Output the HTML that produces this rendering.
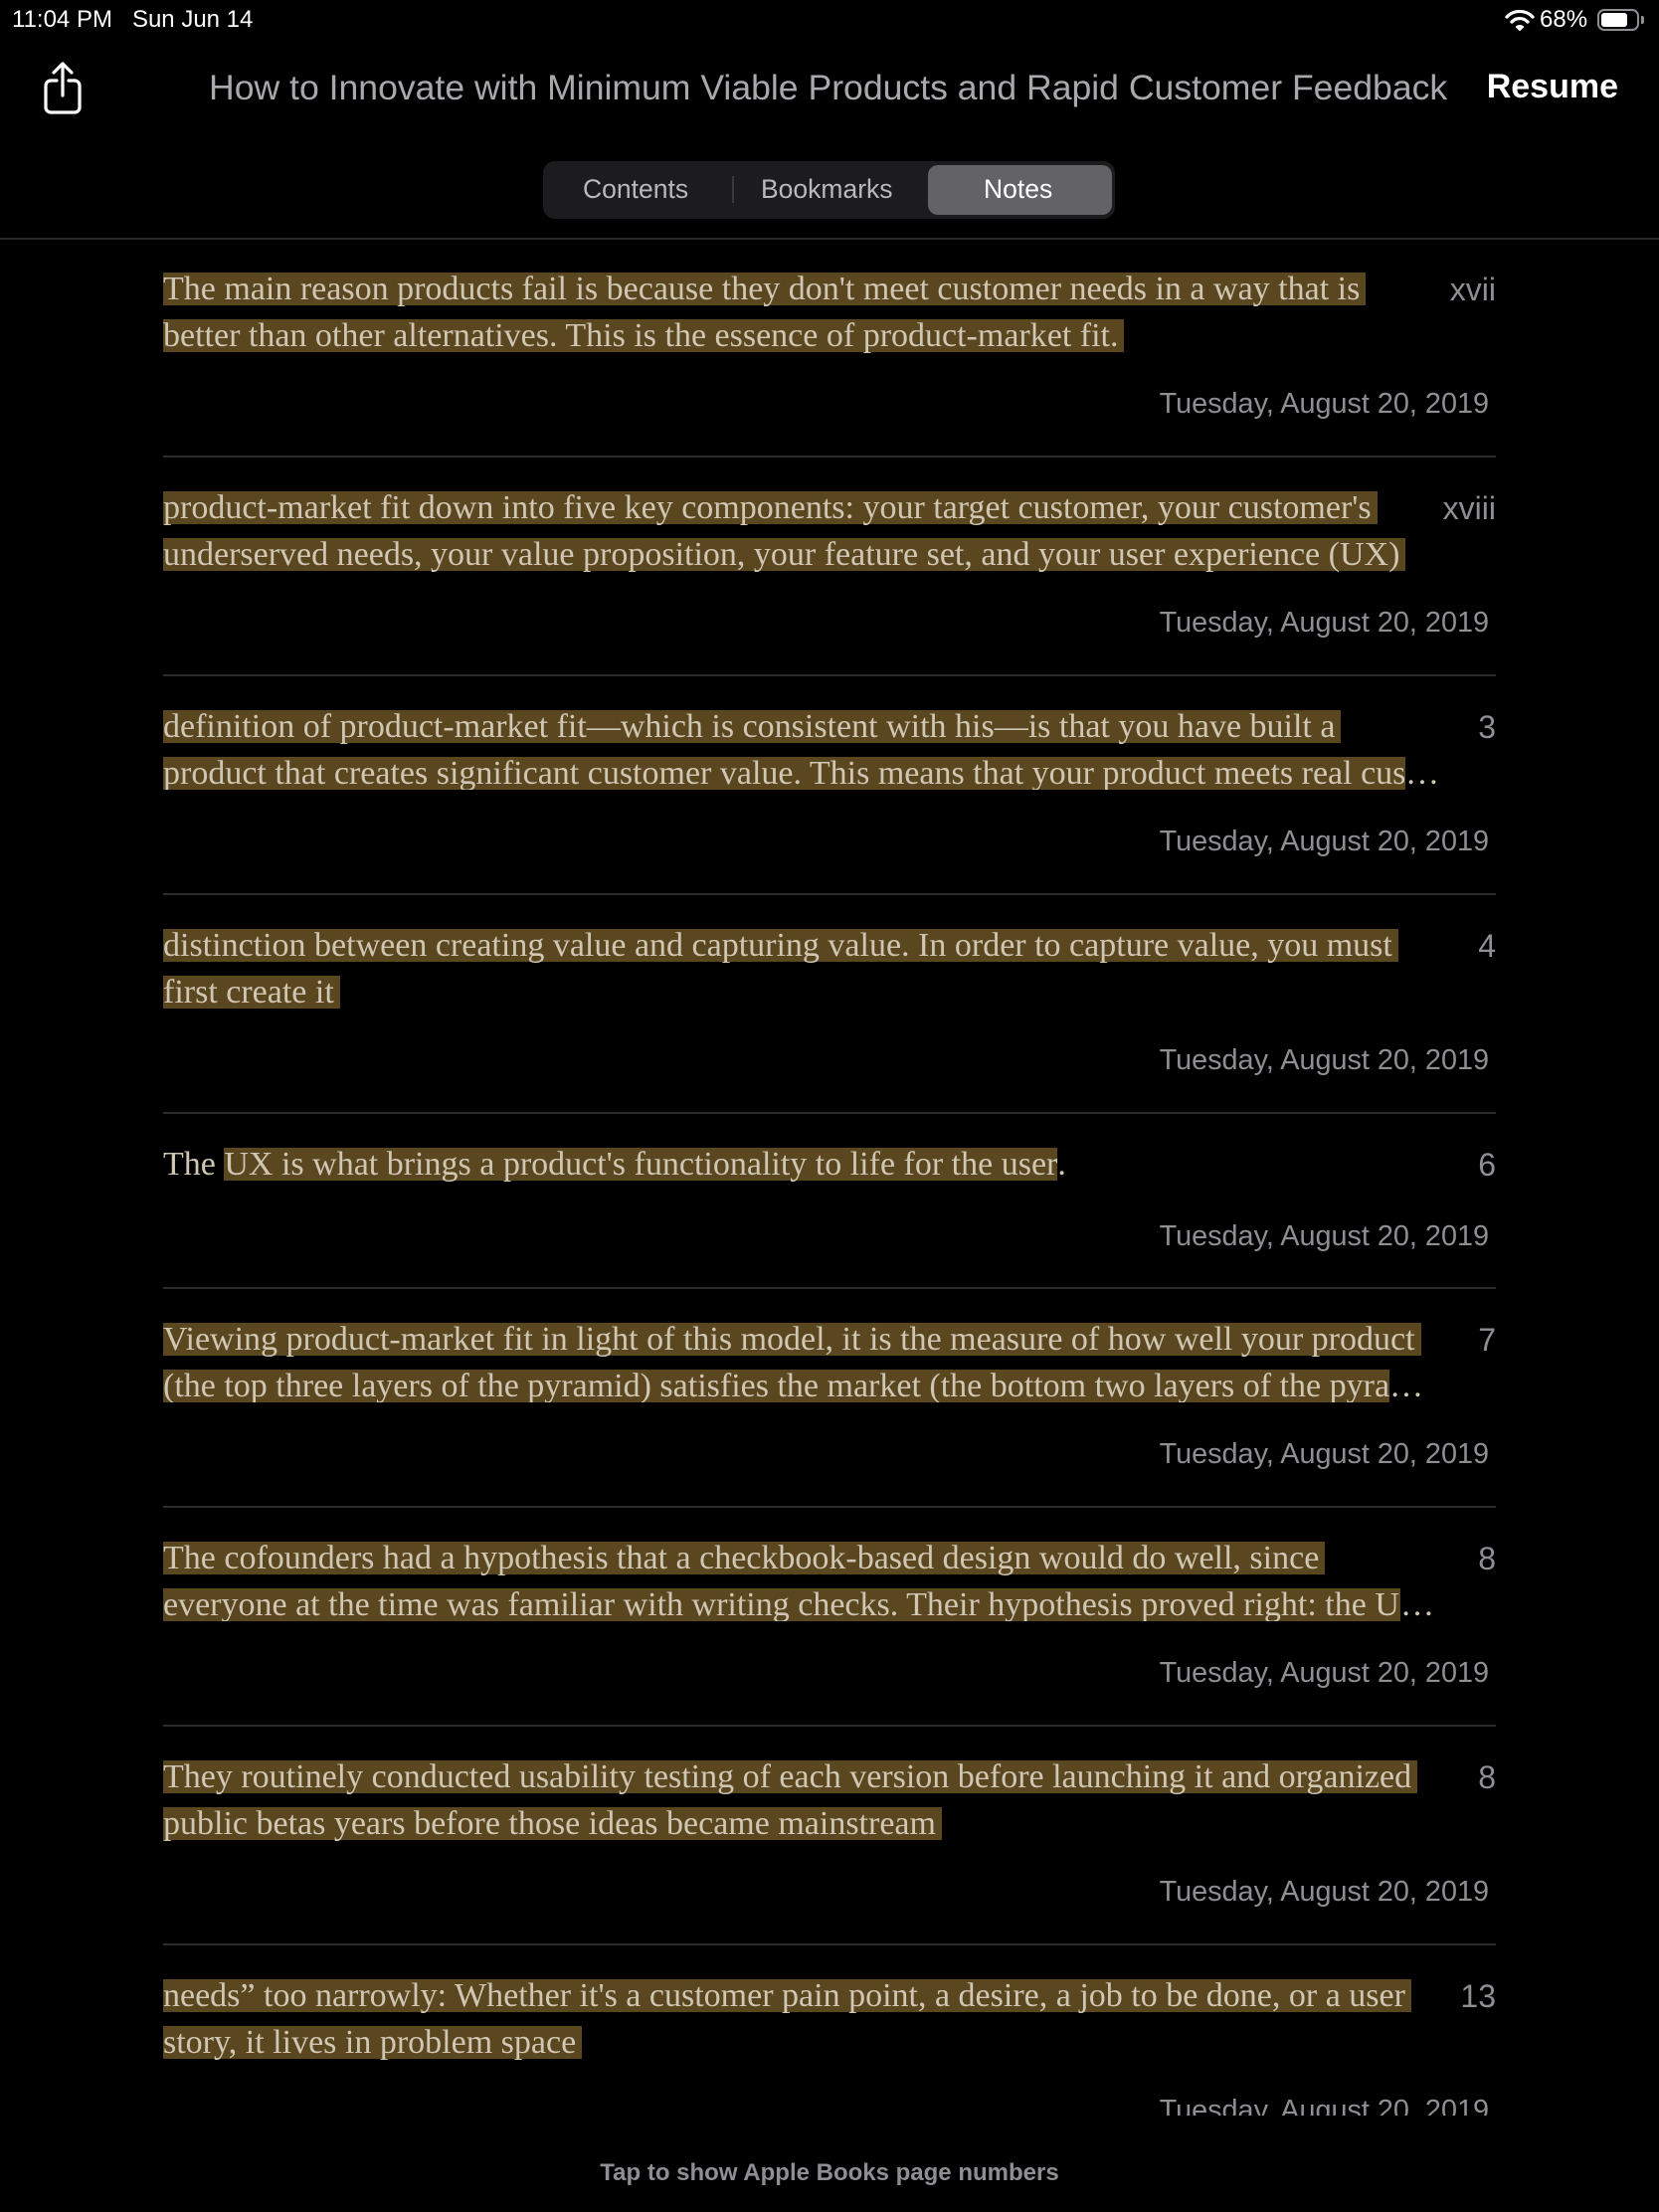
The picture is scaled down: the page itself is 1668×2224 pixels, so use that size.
<!DOCTYPE html>
<html><head><meta charset="utf-8"><style>
*{margin:0;padding:0;box-sizing:border-box}
body{width:1668px;height:2224px;background:#000;position:relative;overflow:hidden;font-family:"Liberation Sans",sans-serif;color:#fff}
.abs{position:absolute}
.st{top:6px;font-size:24px;color:#fff}
.title{top:68px;left:210px;font-size:35.6px;color:#a8a8ad;white-space:nowrap}
.resume{top:68px;right:41px;font-size:34px;font-weight:bold;color:#fff}
.seg{left:546px;top:162px;width:575px;height:58px;background:#1c1c1e;border-radius:12px}
.seg span{position:absolute;top:13px;font-size:26.5px;color:#b8b8bd}
.sel{position:absolute;left:387px;top:4px;width:185px;height:50px;background:#636366;border-radius:10px}
.hsep{left:0;top:239px;width:1668px;height:2px;background:#2a2a2c}
.clip{left:0;top:241px;width:1668px;height:1886px;overflow:hidden}
.row{position:absolute;left:164px;width:1340px}
.ln{position:absolute;left:0;height:33px;line-height:33px;font-family:"Liberation Serif",serif;font-size:34px;color:#cfc6b3;white-space:nowrap}
.hl{background:#5a4720;display:inline-block;height:33px;padding-right:6px}
.tr{overflow:hidden;vertical-align:top}
.pg{position:absolute;right:0;font-size:32px;color:#8e8e93}
.dt{position:absolute;right:7px;font-size:28.8px;color:#8e8e93}
.sep{position:absolute;left:0;width:1340px;height:2px;background:#2a2a2c}
.foot{left:0;width:1668px;top:2171px;text-align:center;font-size:24px;color:#8e8e93;font-weight:bold}
</style></head><body>
<div class="abs st" style="left:12px">11:04 PM&nbsp;&nbsp;&nbsp;Sun Jun 14</div>
<svg class="abs" style="left:1512px;top:8px" width="32" height="24" viewBox="0 0 32 24"><path d="M3 9a18 18 0 0 1 26 0" stroke="#fff" stroke-width="3.2" fill="none" stroke-linecap="round"/><path d="M8 14a11 11 0 0 1 16 0" stroke="#fff" stroke-width="3.2" fill="none" stroke-linecap="round"/><path d="M13 19a4.5 4.5 0 0 1 6 0L16 22z" fill="#fff" stroke="#fff" stroke-width="2" stroke-linejoin="round"/></svg>
<div class="abs st" style="left:1548px">68%</div>
<div class="abs" style="left:1606px;top:9px;width:42px;height:22px;border:2px solid #8e8e93;border-radius:7px"><div style="position:absolute;left:2px;top:2px;width:26px;height:14px;background:#fff;border-radius:3px"></div></div>
<div class="abs" style="left:1650px;top:16px;width:3px;height:8px;background:#8e8e93;border-radius:0 2px 2px 0"></div>
<svg class="abs" style="left:40px;top:60px" width="50" height="56" viewBox="0 0 50 56"><path d="M23 4v32M14 13l9-9 9 9" stroke="#fff" stroke-width="3.2" fill="none" stroke-linecap="round" stroke-linejoin="round"/><path d="M17 21h-6a5 5 0 0 0-5 5v22a5 5 0 0 0 5 5h24a5 5 0 0 0 5-5V26a5 5 0 0 0-5-5h-6" stroke="#fff" stroke-width="3.2" fill="none" stroke-linecap="round"/></svg>
<div class="abs title">How to Innovate with Minimum Viable Products and Rapid Customer Feedback</div>
<div class="abs resume">Resume</div>
<div class="abs seg"><div class="sel"></div>
<span style="left:40px">Contents</span>
<div style="position:absolute;left:190px;top:15px;width:2px;height:27px;background:#3a3a3c"></div>
<span style="left:219px">Bookmarks</span>
<span style="left:443px;color:#fff">Notes</span></div>
<div class="abs hsep"></div>
<div class="abs clip">
<div class="row" style="top:-1px"><div class="ln" style="top:34px"><span class="hl">The main reason products fail is because they don't meet customer needs in a way that is</span></div><div class="ln" style="top:81px"><span class="hl">better than other alternatives. This is the essence of product-market fit.</span></div><div class="pg" style="top:33px">xvii</div><div class="dt" style="top:150px">Tuesday, August 20, 2019</div><div class="sep" style="top:218px"></div></div>

<div class="row" style="top:219px"><div class="ln" style="top:34px"><span class="hl">product-market fit down into five key components: your target customer, your customer's</span></div><div class="ln" style="top:81px"><span class="hl">underserved needs, your value proposition, your feature set, and your user experience (UX)</span></div><div class="pg" style="top:33px">xviii</div><div class="dt" style="top:150px">Tuesday, August 20, 2019</div><div class="sep" style="top:218px"></div></div>

<div class="row" style="top:439px"><div class="ln" style="top:34px"><span class="hl">definition of product-market fit—which is consistent with his—is that you have built a</span></div><div class="ln" style="top:81px"><span class="hl tr" style="width:1249px;padding:0">product that creates significant customer value. This means that your product meets real customer</span>…</div><div class="pg" style="top:33px">3</div><div class="dt" style="top:150px">Tuesday, August 20, 2019</div><div class="sep" style="top:218px"></div></div>

<div class="row" style="top:659px"><div class="ln" style="top:34px"><span class="hl">distinction between creating value and capturing value. In order to capture value, you must</span></div><div class="ln" style="top:81px"><span class="hl">first create it</span></div><div class="pg" style="top:33px">4</div><div class="dt" style="top:150px">Tuesday, August 20, 2019</div><div class="sep" style="top:218px"></div></div>

<div class="row" style="top:879px"><div class="ln" style="top:34px">The <span class="hl" style="padding-right:0">UX is what brings a product's functionality to life for the user</span>.</div><div class="pg" style="top:33px">6</div><div class="dt" style="top:107px">Tuesday, August 20, 2019</div><div class="sep" style="top:174px"></div></div>

<div class="row" style="top:1055px"><div class="ln" style="top:34px"><span class="hl">Viewing product-market fit in light of this model, it is the measure of how well your product</span></div><div class="ln" style="top:81px"><span class="hl tr" style="width:1233px;padding:0">(the top three layers of the pyramid) satisfies the market (the bottom two layers of the pyramid)</span>…</div><div class="pg" style="top:33px">7</div><div class="dt" style="top:150px">Tuesday, August 20, 2019</div><div class="sep" style="top:218px"></div></div>

<div class="row" style="top:1275px"><div class="ln" style="top:34px"><span class="hl">The cofounders had a hypothesis that a checkbook-based design would do well, since</span></div><div class="ln" style="top:81px"><span class="hl tr" style="width:1244px;padding:0">everyone at the time was familiar with writing checks. Their hypothesis proved right: the UI was</span>…</div><div class="pg" style="top:33px">8</div><div class="dt" style="top:150px">Tuesday, August 20, 2019</div><div class="sep" style="top:218px"></div></div>

<div class="row" style="top:1495px"><div class="ln" style="top:34px"><span class="hl">They routinely conducted usability testing of each version before launching it and organized</span></div><div class="ln" style="top:81px"><span class="hl">public betas years before those ideas became mainstream</span></div><div class="pg" style="top:33px">8</div><div class="dt" style="top:150px">Tuesday, August 20, 2019</div><div class="sep" style="top:218px"></div></div>

<div class="row" style="top:1715px"><div class="ln" style="top:34px"><span class="hl">needs” too narrowly: Whether it's a customer pain point, a desire, a job to be done, or a user</span></div><div class="ln" style="top:81px"><span class="hl">story, it lives in problem space</span></div><div class="pg" style="top:33px">13</div><div class="dt" style="top:150px">Tuesday, August 20, 2019</div></div>
</div>
<div class="abs foot">Tap to show Apple Books page numbers</div>
</body></html>
